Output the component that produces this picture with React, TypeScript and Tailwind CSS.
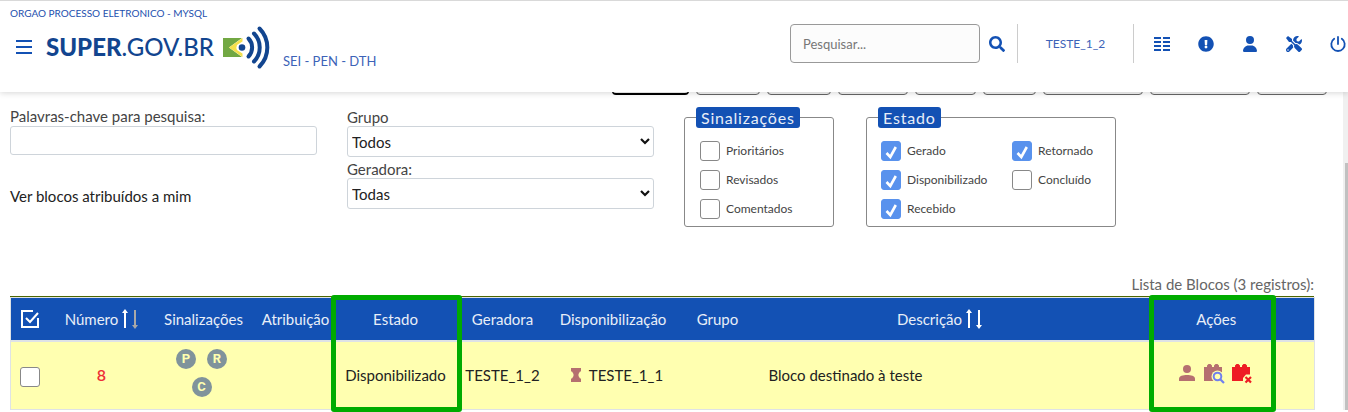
import { useState } from "react";
import { FaSearch, FaExclamationCircle, FaTools } from "react-icons/fa";
import { FaUser } from "react-icons/fa6";

const toolbarWidths = [
  "w-[77px] border-black border-b-2",
  "w-[64px] border-[#666]",
  "w-[64px] border-[#666]",
  "w-[70px] border-[#666]",
  "w-[61px] border-[#666]",
  "w-[53px] border-[#666]",
  "w-[100px] border-[#666]",
  "w-[100px] border-[#666]",
  "w-[70px] border-[#666]",
];

function Logo() {
  return (
    <span className="flex items-center">
      <span className="text-[24px] font-medium leading-8 text-[#12458f]">
        <span className="font-black">SUPER</span>.GOV.BR
      </span>
      <svg width="50" height="46" viewBox="0 0 50 46" className="ml-2" aria-hidden="true">
        <path d="M1 14H20L7 23.500L20 33H1Z" fill="#72a843" />
        <path d="M20.500 14V17.500L15 21A6 6 0 0 0 15 26L20.500 29.500V33L7 23.500Z" fill="#f5e04b" />
        <circle cx="20" cy="23.500" r="3.300" fill="#12458f" />
        <g fill="none" stroke="#12458f" strokeWidth="4" strokeLinecap="round">
          <path d="M26.500 14.500A13 13 0 0 1 26.500 32.500" />
          <path d="M32 9.500A20 20 0 0 1 32 37.500" />
          <path d="M37.500 4.500A27 27 0 0 1 37.500 42.500" />
        </g>
      </svg>
    </span>
  );
}

function GridIcon() {
  return (
    <svg width="16" height="14" viewBox="0 0 16 14" fill="#1351b4" aria-hidden="true">
      {[0, 4, 8, 12].map((y) => (
        <g key={y}>
          <rect x="0" y={y} width="7" height="2" />
          <rect x="9" y={y} width="7" height="2" />
        </g>
      ))}
    </svg>
  );
}

function PowerIcon() {
  return (
    <svg width="16" height="16" viewBox="0 0 16 16" fill="none" stroke="#1351b4" strokeWidth="1.800" strokeLinecap="round" aria-hidden="true">
      <path d="M4.200 2.800A6.700 6.700 0 1 0 11.800 2.800M8 1V8" />
    </svg>
  );
}

function SortArrows({ down }: { down: string }) {
  return (
    <svg width="17" height="20" viewBox="0 0 17 20" aria-hidden="true">
      <path d="M4 0L7 4H5V19H3V4H1Z" fill="#fff" />
      <path d="M14 20L17 16H15V1H13V16H11Z" fill={down} />
    </svg>
  );
}

function Brick({ color, children }: { color: string; children: React.ReactNode }) {
  return (
    <svg width="21" height="21" viewBox="0 0 21 21" aria-hidden="true">
      <path d="M0 4H3V2.500L4.500 1H6.500L8 2.500V4H10V2.500L11.500 1H13.500L15 2.500V4H18V18H0Z" fill={color} />
      {children}
    </svg>
  );
}

function Check({ label, on = false }: { label: string; on?: boolean }) {
  const [checked, setChecked] = useState(on);
  return (
    <label className="flex h-5 items-center gap-[6px] text-[12px] text-[#444]">
      <span className="relative h-5 w-5 shrink-0">
        <input
          type="checkbox"
          checked={checked}
          onChange={() => setChecked(!checked)}
          className="block h-5 w-5 appearance-none rounded-[3px] border border-[#888] bg-white checked:border-[#5992ed] checked:bg-[#5992ed]"
        />
        {checked && (
          <svg viewBox="0 0 20 20" className="pointer-events-none absolute inset-0" fill="none" stroke="#fff" strokeWidth="2.600" aria-hidden="true">
            <path d="M5.500 12L9.300 16L14.800 6" />
          </svg>
        )}
      </span>
      {label}
    </label>
  );
}

function Flag({ letter }: { letter: string }) {
  return (
    <span className="flex h-5 w-5 items-center justify-center rounded-full bg-[#80939b] font-['Roboto',sans-serif] text-[13px] font-bold leading-5 text-[#ffffb0]">
      {letter}
    </span>
  );
}

const legendClass =
  "ml-[11px] h-[21px] rounded-[3px] bg-[#1351b4] px-[5px] text-[16px] leading-[22px] tracking-wider text-[#e8eef8]";
const selectBox =
  "h-[31px] w-full rounded-[3px] border border-[#ced4da] bg-white appearance-none pl-1 pt-px text-[15px] text-[#222]";

function Select({ id, label, value }: { id: string; label: string; value: string }) {
  return (
    <div>
      <label htmlFor={id} className="block leading-[18px]">
        {label}
      </label>
      <div className="relative">
        <select id={id} className={selectBox}>
          <option>{value}</option>
        </select>
        <svg width="10" height="7" viewBox="0 0 10 7" className="pointer-events-none absolute right-[4px] top-[12px]" fill="none" stroke="#111" strokeWidth="2.200" aria-hidden="true">
          <path d="M1 1L5 5L9 1" />
        </svg>
      </div>
    </div>
  );
}

export default function App() {
  return (
    <div className="min-h-screen bg-white font-['Lato',sans-serif] text-[15px] text-[#444]">
      <header className="relative z-10 flex h-[92px] justify-between border-t border-[#d9d9d9] bg-white shadow-[0_1px_6px_rgba(0,0,0,0.16)]">
        <div className="pl-[10px] pt-1 text-[#1d4fae]">
          <div className="text-[10px] leading-4">ORGAO PROCESSO ELETRONICO - MYSQL</div>
          <div className="flex items-center pl-[6px] pt-[3px]">
            <button type="button" aria-label="Menu" className="mr-[14px] flex w-4 flex-col gap-1">
              <span className="h-[2px] bg-[#1351b4]" />
              <span className="h-[2px] bg-[#1351b4]" />
              <span className="h-[2px] bg-[#1351b4]" />
            </button>
            <Logo />
            <span className="ml-[11px] pt-7 text-[13px] leading-4 text-[#3d63b8]">SEI - PEN - DTH</span>
          </div>
        </div>
        <div className="mt-[23px] flex h-[39px] items-center pr-[2px]">
          <input
            type="text"
            aria-label="Pesquisar"
            placeholder="Pesquisar..."
            className="h-[39px] w-[190px] rounded-[4px] border border-[#999] bg-[#fcfcfc] px-3 text-[13px] placeholder:text-[#777]"
          />
          <button type="button" aria-label="Buscar" className="ml-[9px]">
            <FaSearch size={16} color="#1351b4" />
          </button>
          <span className="ml-[12px] h-full w-px bg-[#ccc]" />
          <a href="#usuario" className="w-[115px] text-center text-[12px] text-[#3d63b8]">
            TESTE_1_2
          </a>
          <span className="h-full w-px bg-[#ccc]" />
          <nav className="ml-5 flex items-center gap-[28px]">
            <button type="button" aria-label="Painel"><GridIcon /></button>
            <button type="button" aria-label="Avisos"><FaExclamationCircle size={16} color="#1351b4" /></button>
            <button type="button" aria-label="Perfil"><FaUser size={16} color="#1351b4" /></button>
            <button type="button" aria-label="Ferramentas"><FaTools size={16} color="#1351b4" /></button>
            <button type="button" aria-label="Sair"><PowerIcon /></button>
          </nav>
        </div>
      </header>

      <div className="flex">
        <main className="min-w-0 flex-1 pl-[10px]">
          <div className="flex h-[3px] items-end justify-end gap-[7px] overflow-hidden pr-4">
            {toolbarWidths.map((w, i) => (
              <button
                key={i}
                type="button"
                aria-label={`Comando ${i + 1}`}
                className={`h-7 shrink-0 rounded-[4px] border bg-[#f3f3f3] ${w}`}
              />
            ))}
          </div>

          <div className="mr-[29px]">
            <form className="grid grid-cols-[307fr_307fr_152fr_250fr_168fr] gap-x-[30px] pt-[12px]">
              <div>
                <label htmlFor="palavras" className="block pb-px leading-[18px]">
                  Palavras-chave para pesquisa:
                </label>
                <input id="palavras" type="text" className="block h-[29px] w-full rounded-[3px] border border-[#ced4da] px-2" />
                <p className="mt-[31px] leading-5 text-[#222]">Ver blocos atribuídos a mim</p>
              </div>
              <div className="flex flex-col gap-[3px] pt-px">
                <Select id="grupo" label="Grupo" value="Todos" />
                <Select id="geradora" label="Geradora:" value="Todas" />
              </div>
              <fieldset className="mr-[2px] h-[120px] rounded-[3px] border border-[#888]">
                <legend className={legendClass}>Sinalizações</legend>
                <div className="flex flex-col gap-[9px] pl-[15px] pt-[13px]">
                  <Check label="Prioritários" />
                  <Check label="Revisados" />
                  <Check label="Comentados" />
                </div>
              </fieldset>
              <fieldset className="h-[120px] rounded-[3px] border border-[#888]">
                <legend className={legendClass}>Estado</legend>
                <div className="grid grid-cols-[131px_1fr] gap-y-[9px] pl-[14px] pt-[13px]">
                  <Check label="Gerado" on />
                  <Check label="Retornado" on />
                  <Check label="Disponibilizado" on />
                  <Check label="Concluído" />
                  <Check label="Recebido" on />
                </div>
              </fieldset>
            </form>

            <p className="pb-[2px] pt-[47px] text-right leading-5 text-[#666]">Lista de Blocos (3 registros):</p>

            <div className="relative border-t border-[#4d6600]">
              <table className="w-full table-fixed border-collapse border border-[#dee2e6] text-center">
                <colgroup>
                  <col className="w-[39px]" />
                  <col className="w-[104px]" />
                  <col className="w-[100px]" />
                  <col className="w-[84px]" />
                  <col className="w-[116px]" />
                  <col className="w-[98px]" />
                  <col className="w-[123px]" />
                  <col className="w-[86px]" />
                  <col className="w-[358px]" />
                  <col className="w-[196px]" />
                </colgroup>
                <thead>
                  <tr className="h-[43px] border-b-2 border-[#dee2e6] bg-[#1351b4] text-[#e8eef8] *:p-0 *:font-normal">
                    <th>
                      <svg width="18" height="18" viewBox="0 0 18 18" className="mx-auto" fill="none" stroke="#fff" strokeWidth="2" aria-label="Selecionar todos">
                        <path d="M12 1H1V17H17V8M5 8L9 12L17 3" />
                      </svg>
                    </th>
                    <th><span className="flex items-center justify-center gap-[3px]">Número<SortArrows down="#a8a8a8" /></span></th>
                    <th>Sinalizações</th>
                    <th>Atribuição</th>
                    <th>Estado</th>
                    <th>Geradora</th>
                    <th>Disponibilização</th>
                    <th>Grupo</th>
                    <th><span className="flex items-center justify-center gap-[3px]">Descrição<SortArrows down="#fff" /></span></th>
                    <th>Ações</th>
                  </tr>
                </thead>
                <tbody>
                  <tr className="h-[69px] bg-[#ffffb0] text-[#222] *:p-0">
                    <td>
                      <div className="pt-[3px]">
                        <input type="checkbox" aria-label="Selecionar bloco 8" className="mx-auto block h-5 w-5 appearance-none rounded-[3px] border border-[#888] bg-white" />
                      </div>
                    </td>
                    <td className="text-[16px] font-semibold text-[#ee2e36]">8</td>
                    <td>
                      <div className="pb-1 pr-1">
                        <span className="mx-auto flex w-[56px] flex-wrap justify-center gap-x-[11px] gap-y-2">
                          <Flag letter="P" />
                          <Flag letter="R" />
                          <Flag letter="C" />
                        </span>
                      </div>
                    </td>
                    <td />
                    <td>Disponibilizado</td>
                    <td>TESTE_1_2</td>
                    <td>
                      <span className="flex items-center justify-center gap-2 pl-2">
                        <svg width="10" height="14" viewBox="0 0 10 14" fill="#b57070" aria-hidden="true">
                          <path d="M0 0H10V3.500H9L7.500 6V8L9 10.500H10V14H0V10.500H1L2.500 8V6L1 3.500H0Z" />
                        </svg>
                        TESTE_1_1
                      </span>
                    </td>
                    <td />
                    <td><span className="block pl-2 text-left">Bloco destinado à teste</span></td>
                    <td>
                      <span className="flex items-center justify-center gap-[7px] pb-1 pr-[2px]">
                        <button type="button" aria-label="Atribuir">
                          <svg width="20" height="20" viewBox="0 0 20 20" fill="#b57070" aria-hidden="true">
                            <circle cx="10" cy="6" r="4" />
                            <path d="M2 18V15.500C2 13 6 12 10 12S18 13 18 15.500V18Z" />
                          </svg>
                        </button>
                        <button type="button" aria-label="Visualizar">
                          <Brick color="#b57070">
                            <circle cx="13.500" cy="13.500" r="6" fill="#ffffb0" />
                            <circle cx="13.500" cy="13.500" r="3.800" fill="#ffffb0" stroke="#7080ee" strokeWidth="2" />
                            <path d="M16.500 16.500L20 20" stroke="#7080ee" strokeWidth="2.200" />
                          </Brick>
                        </button>
                        <button type="button" aria-label="Excluir">
                          <Brick color="#ee1c24">
                            <path d="M11 18V15L14 11.500H19V18Z" fill="#ffffb0" />
                            <path d="M13.500 14L19 19.500M19 14L13.500 19.500" stroke="#ee1c24" strokeWidth="2.200" />
                          </Brick>
                        </button>
                      </span>
                    </td>
                  </tr>
                </tbody>
              </table>
              <div className="pointer-events-none absolute -bottom-[2px] -top-[2px] left-[24.6%] w-[131px] rounded-[3px] border-[5px] border-[#00ab00]" />
              <div className="pointer-events-none absolute -bottom-[2px] -top-[2px] right-[38px] w-[127px] rounded-[3px] border-[5px] border-[#00ab00]" />
            </div>
          </div>
        </main>
        <div className="w-[5px] bg-[#f0f0f0] pl-[2px] pt-[71px]" aria-hidden="true">
          <div className="h-full bg-[#c1c1c1]" />
        </div>
      </div>
    </div>
  );
}
